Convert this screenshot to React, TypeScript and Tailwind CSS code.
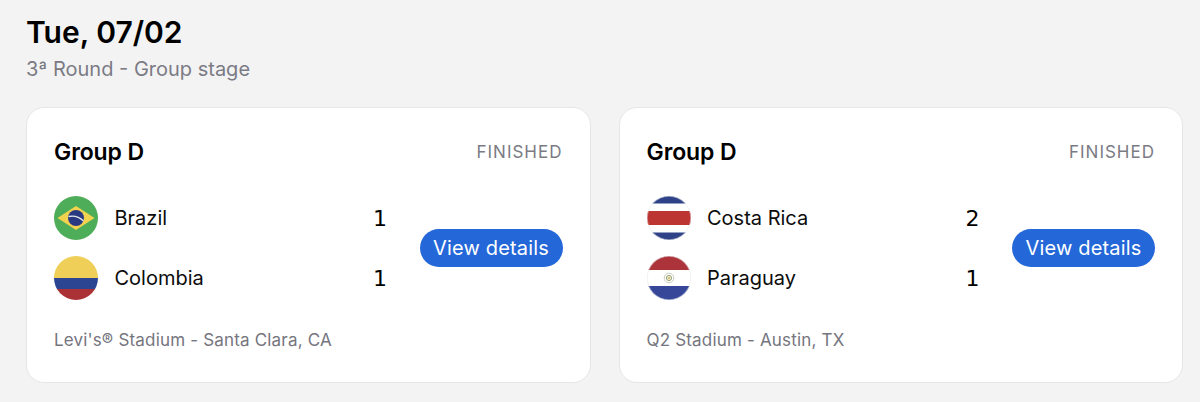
import React from 'react';

interface Team {
  name: string;
  score: number;
  flag: React.ReactNode;
}

interface Match {
  group: string;
  status: string;
  venue: string;
  teams: Team[];
}

function Brazil() {
  return (
    <svg viewBox="0 0 44 44" className="w-[44px] h-[44px] shrink-0">
      <defs>
        <clipPath id="br"><circle cx="22" cy="22" r="22" /></clipPath>
      </defs>
      <g clipPath="url(#br)">
        <rect width="44" height="44" fill="#4ead58" />
        <path d="M3.500 22 22 10l18.500 12L22 34z" fill="#f2d24f" />
        <circle cx="22" cy="22" r="8" fill="#2a3a82" />
        <path d="M14.500 20.500c5-1 11 .5 15 4.500" stroke="#e8e8e8" strokeWidth="1.300" fill="none" />
      </g>
    </svg>
  );
}

function Colombia() {
  return (
    <svg viewBox="0 0 44 44" className="w-[44px] h-[44px] shrink-0">
      <defs>
        <clipPath id="co"><circle cx="22" cy="22" r="22" /></clipPath>
      </defs>
      <g clipPath="url(#co)">
        <rect width="44" height="22" fill="#efcf58" />
        <rect y="22" width="44" height="11" fill="#2c4593" />
        <rect y="33" width="44" height="11" fill="#aa3136" />
      </g>
    </svg>
  );
}

function CostaRica() {
  return (
    <svg viewBox="0 0 44 44" className="w-[44px] h-[44px] shrink-0">
      <defs>
        <clipPath id="cr"><circle cx="22" cy="22" r="22" /></clipPath>
      </defs>
      <g clipPath="url(#cr)">
        <rect width="44" height="44" fill="#ffffff" />
        <rect width="44" height="7.500" fill="#2f4287" />
        <rect y="15" width="44" height="14" fill="#bd3532" />
        <rect y="36.500" width="44" height="7.500" fill="#2f4287" />
      </g>
      <circle cx="22" cy="22" r="21.700" fill="none" stroke="#e4e4e8" strokeWidth="0.500" />
    </svg>
  );
}

function Paraguay() {
  return (
    <svg viewBox="0 0 44 44" className="w-[44px] h-[44px] shrink-0">
      <defs>
        <clipPath id="py"><circle cx="22" cy="22" r="22" /></clipPath>
      </defs>
      <g clipPath="url(#py)">
        <rect width="44" height="14" fill="#ab3339" />
        <rect y="14" width="44" height="16" fill="#ffffff" />
        <rect y="30" width="44" height="14" fill="#36479a" />
        <circle cx="22" cy="22" r="4.800" fill="#ffffff" stroke="#c9cdbd" strokeWidth="1" />
        <circle cx="22" cy="22" r="2.600" fill="#f2f0d8" stroke="#8c9a6e" strokeWidth="0.900" />
        <circle cx="22" cy="22" r="0.900" fill="#c9a93e" />
      </g>
      <circle cx="22" cy="22" r="21.700" fill="none" stroke="#e4e4e8" strokeWidth="0.500" />
    </svg>
  );
}

const matches: Match[] = [
  {
    group: 'Group D',
    status: 'FINISHED',
    venue: "Levi's® Stadium - Santa Clara, CA",
    teams: [
      { name: 'Brazil', score: 1, flag: <Brazil /> },
      { name: 'Colombia', score: 1, flag: <Colombia /> },
    ],
  },
  {
    group: 'Group D',
    status: 'FINISHED',
    venue: 'Q2 Stadium - Austin, TX',
    teams: [
      { name: 'Costa Rica', score: 2, flag: <CostaRica /> },
      { name: 'Paraguay', score: 1, flag: <Paraguay /> },
    ],
  },
];

function MatchCard({ match }: { match: Match }) {
  return (
    <div className="h-[276px] bg-white rounded-[18px] border border-[#e6e6ea] px-[27px] pt-[30px]">
      <div className="flex items-center justify-between h-[28px]">
        <h3 className="text-[23px] font-semibold text-black tracking-[-0.1px]">{match.group}</h3>
        <span className="text-[17px] leading-[30px] text-[#7b7b84] tracking-[1px]">{match.status}</span>
      </div>
      <div className="flex items-center justify-between mt-[30px]">
        <div className="w-[333px] flex flex-col gap-[16px]">
          {match.teams.map(team => (
            <div key={team.name} className="flex items-center h-[44px]">
              {team.flag}
              <span className="ml-[16.5px] text-[20px] text-[#0c0c0c]">{team.name}</span>
              <span className="ml-auto pt-[1px] text-[22px] font-['DejaVu_Sans',sans-serif] text-black">{team.score}</span>
            </div>
          ))}
        </div>
        <button className="h-[38px] w-[143px] rounded-full bg-[#2467d8] text-white text-[20px] tracking-[0.15px] whitespace-nowrap">
          View details
        </button>
      </div>
      <p className="mt-[28px] text-[17px] tracking-[0.18px] text-[#75757e]">{match.venue}</p>
    </div>
  );
}

export default function App() {
  return (
    <div className="w-[1200px] h-[402px] overflow-hidden bg-[#f3f3f4] pl-[26px] pr-[17px] pt-[12px] font-['Inter',sans-serif]">
      <h1 className="text-[30px] leading-[40px] font-semibold text-black">Tue, 07/02</h1>
      <p className="text-[20px] leading-[26px] mt-[4px] text-[#7b7b84]">3ª Round - Group stage</p>
      <div className="grid grid-cols-2 gap-[28px] mt-[25px]">
        {matches.map(match => (
          <MatchCard key={match.venue} match={match} />
        ))}
      </div>
    </div>
  );
}
